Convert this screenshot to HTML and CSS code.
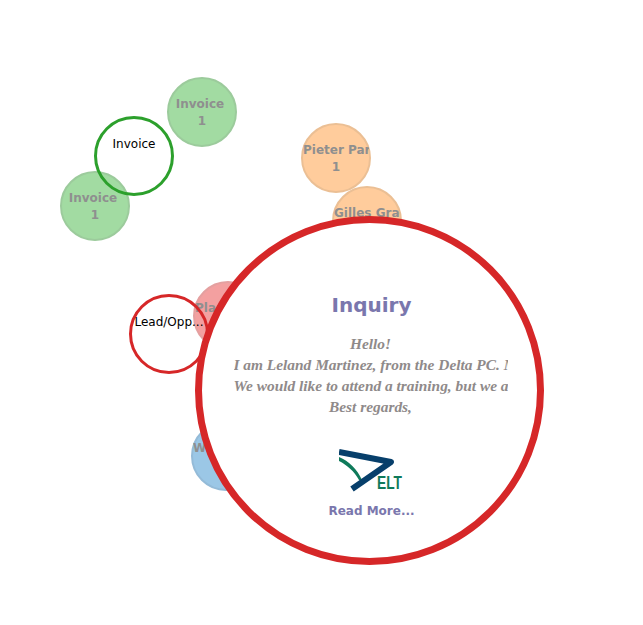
FILE: index.html
```html
<!DOCTYPE html>
<html lang="en">
<head>
    <meta charset="UTF-8">
    <meta name="viewport" content="width=device-width, initial-scale=1.0">
    <title>Inquiries</title>
    <link rel="stylesheet" href="styles.css">
</head>
<body>
    <div class="chart">
        <!-- small bubbles -->
        <div class="bubble green invoice-a"><span class="name">Invoice </span><span class="name">1</span></div>
        <div class="bubble green invoice-b"><span class="name">Invoice </span><span class="name">1</span></div>
        <div class="bubble orange pieter"><span class="name">Pieter Parker </span><span class="name">1</span></div>
        <div class="bubble orange gilles"><span class="name">Gilles Gravie </span><span class="name">1</span></div>
        <div class="bubble red plaza"><span class="name">Planet Software </span><span class="name">1</span></div>
        <div class="bubble blue website"><span class="name">Wood Corner Inc </span><span class="name">1</span></div>

        <!-- category rings -->
        <div class="ring ring-green"><span class="ring-label">Invoice</span></div>
        <div class="ring ring-red"><span class="ring-label">Lead/Opp...</span></div>

        <!-- open bubble -->
        <div class="detail">
            <h2 class="detail-title">Inquiry</h2>
            <div class="detail-body">
                <p>Hello!</p>
                <p>I am Leland Martinez, from the Delta PC. My company is interested in your services.</p>
                <p>We would like to attend a training, but we are not sure about the dates.</p>
                <p>Best regards,</p>
            </div>
            <svg class="logo" width="66" height="46" viewBox="0 0 66 46">
                <path d="M0 11 C10 15 18 23 23 34 L20 34 C15 25 8 19 0 15 Z" fill="#0f7a5a"/>
                <path d="M0 6 L52 16 L13 43" fill="none" stroke="#073f6b" stroke-width="6" stroke-linejoin="round"/>
                <text x="38" y="43" class="logo-text" textLength="25" lengthAdjust="spacingAndGlyphs">ELT</text>
            </svg>
            <a class="read-more">Read More...</a>
        </div>
    </div>
</body>
</html>
```

FILE: styles.css
```css
html, body {
    margin: 0;
    padding: 0;
    background-color: #fff;
}

.chart {
    position: relative;
    width: 643px;
    height: 625px;
    overflow: hidden;
    font-family: "DejaVu Sans", sans-serif;
}

.bubble {
    position: absolute;
    box-sizing: border-box;
    width: 70px;
    height: 70px;
    border-radius: 50%;
    border: 2px solid;
    display: flex;
    flex-direction: column;
    align-items: center;
    padding-top: 17px;
}

.name {
    width: 66px;
    overflow: hidden;
    white-space: pre;
    text-align: center;
    font-size: 12px;
    font-weight: bold;
    line-height: 17px;
    color: #8f8f8f;
}

.green { background-color: #a2dba2; border-color: #9ccb9c; }
.orange { background-color: #ffcc9c; border-color: #ebbf94; }
.red { background-color: #f3a0a0; border-color: #e4a0a0; }
.blue { background-color: #9bc7e6; border-color: #94bbd8; }

.invoice-a { left: 167px; top: 77px; }
.invoice-b { left: 60px; top: 171px; }
.pieter { left: 301px; top: 123px; }
.gilles { left: 332px; top: 186px; }
.plaza { left: 193px; top: 281px; }
.website { left: 191px; top: 421px; }

.ring {
    position: absolute;
    box-sizing: border-box;
    width: 80px;
    height: 80px;
    border-radius: 50%;
    border: 3px solid;
    display: flex;
    justify-content: center;
    padding-top: 17px;
}

.ring-green { left: 94px; top: 116px; border-color: #2ca02c; }
.ring-red { left: 129px; top: 294px; border-color: #d62728; }

.ring-label {
    font-size: 12px;
    line-height: 16px;
    color: #000;
    white-space: nowrap;
}

.detail {
    position: absolute;
    left: 195px;
    top: 216px;
    box-sizing: border-box;
    width: 349px;
    height: 349px;
    border-radius: 50%;
    border: 7px solid #d62728;
    background-color: #fff;
    display: flex;
    flex-direction: column;
    align-items: center;
    padding-top: 70px;
}

.detail-title {
    margin: 0 0 16px 4px;
    font-size: 20px;
    line-height: 24px;
    font-weight: bold;
    color: #7a77ad;
}

.detail-body {
    width: 274px;
    margin-left: 2px;
    overflow: hidden;
    font-family: "Liberation Serif", serif;
    font-size: 15.4px;
    font-style: italic;
    font-weight: bold;
    line-height: 21px;
    color: #8f8a8a;
    text-align: center;
}

.detail-body p {
    margin: 0;
    white-space: nowrap;
}

.logo {
    display: block;
    margin: 29px 0 0 4px;
}

.logo-text {
    font-family: "Liberation Sans", sans-serif;
    font-size: 18px;
    font-weight: bold;
    fill: #0f7a5a;
}

.read-more {
    margin: 11px 0 0 4px;
    font-size: 12px;
    line-height: 16px;
    font-weight: bold;
    color: #7a77ad;
}
```
